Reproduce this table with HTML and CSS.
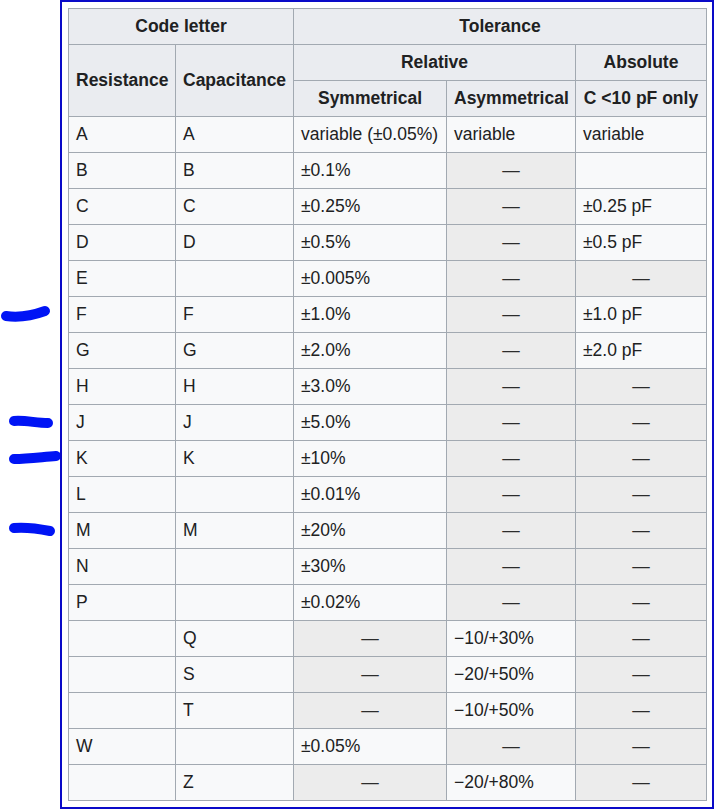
FILE: index.html
```html
<!DOCTYPE html>
<html>
<head>
<meta charset="utf-8">
<link rel="stylesheet" href="styles.css">
</head>
<body>
<svg class="marks" width="60" height="809" viewBox="0 0 60 809">
  <path d="M6 316 C 20 318, 34 315, 45 311"/>
  <path d="M14 421 C 25 420, 36 423, 48 423"/>
  <path d="M14 459 C 28 459, 42 457, 56 456"/>
  <path d="M14 528 C 26 527, 40 529, 50 531"/>
</svg>
<div class="frame">
<table class="wikitable">
  <colgroup>
    <col class="c1"><col class="c2"><col class="c3"><col class="c4"><col class="c5">
  </colgroup>
  <thead>
    <tr><th colspan="2">Code letter</th><th colspan="3">Tolerance</th></tr>
    <tr><th rowspan="2">Resistance</th><th rowspan="2">Capacitance</th><th colspan="2">Relative</th><th>Absolute</th></tr>
    <tr><th>Symmetrical</th><th>Asymmetrical</th><th>C &lt;10 pF only</th></tr>
  </thead>
  <tbody>
    <tr><td>A</td><td>A</td><td>variable (±0.05%)</td><td>variable</td><td>variable</td></tr>
    <tr><td>B</td><td>B</td><td>±0.1%</td><td class="na">—</td><td></td></tr>
    <tr><td>C</td><td>C</td><td>±0.25%</td><td class="na">—</td><td>±0.25 pF</td></tr>
    <tr><td>D</td><td>D</td><td>±0.5%</td><td class="na">—</td><td>±0.5 pF</td></tr>
    <tr><td>E</td><td></td><td>±0.005%</td><td class="na">—</td><td class="na">—</td></tr>
    <tr><td>F</td><td>F</td><td>±1.0%</td><td class="na">—</td><td>±1.0 pF</td></tr>
    <tr><td>G</td><td>G</td><td>±2.0%</td><td class="na">—</td><td>±2.0 pF</td></tr>
    <tr><td>H</td><td>H</td><td>±3.0%</td><td class="na">—</td><td class="na">—</td></tr>
    <tr><td>J</td><td>J</td><td>±5.0%</td><td class="na">—</td><td class="na">—</td></tr>
    <tr><td>K</td><td>K</td><td>±10%</td><td class="na">—</td><td class="na">—</td></tr>
    <tr><td>L</td><td></td><td>±0.01%</td><td class="na">—</td><td class="na">—</td></tr>
    <tr><td>M</td><td>M</td><td>±20%</td><td class="na">—</td><td class="na">—</td></tr>
    <tr><td>N</td><td></td><td>±30%</td><td class="na">—</td><td class="na">—</td></tr>
    <tr><td>P</td><td></td><td>±0.02%</td><td class="na">—</td><td class="na">—</td></tr>
    <tr><td></td><td>Q</td><td class="na">—</td><td>−10/+30%</td><td class="na">—</td></tr>
    <tr><td></td><td>S</td><td class="na">—</td><td>−20/+50%</td><td class="na">—</td></tr>
    <tr><td></td><td>T</td><td class="na">—</td><td>−10/+50%</td><td class="na">—</td></tr>
    <tr><td>W</td><td></td><td>±0.05%</td><td class="na">—</td><td class="na">—</td></tr>
    <tr><td></td><td>Z</td><td class="na">—</td><td>−20/+80%</td><td class="na">—</td></tr>
  </tbody>
</table>
</div>
</body>
</html>
```

FILE: styles.css
```css
html, body {
  margin: 0;
  padding: 0;
  background: #ffffff;
}

body {
  font-family: "Liberation Sans", Arial, sans-serif;
  color: #202122;
}

.marks {
  position: absolute;
  left: 0;
  top: 0;
}

.marks path {
  fill: none;
  stroke: #0014f5;
  stroke-width: 10;
  stroke-linecap: round;
}

.frame {
  margin-left: 60px;
  width: 638px;
  padding: 6px;
  border: 2px solid #0a0ac8;
}

.wikitable {
  border-collapse: collapse;
  table-layout: fixed;
  width: 638px;
  background: #f8f9fa;
  color: #202122;
  font-size: 17.5px;
  line-height: 1.6;
}

.c1 { width: 107px; }
.c2 { width: 118px; }
.c3 { width: 153px; }
.c4 { width: 129px; }
.c5 { width: 131px; }

.wikitable th,
.wikitable td {
  border: 1px solid #a2a9b1;
  padding: 3px 7px 4px;
  text-align: left;
  vertical-align: middle;
  white-space: nowrap;
  overflow: hidden;
}

.wikitable th {
  background: #eaecf0;
  text-align: center;
  font-weight: bold;
}

.wikitable td.na {
  background: #ececec;
  color: #2c2c2c;
  text-align: center;
}
```
